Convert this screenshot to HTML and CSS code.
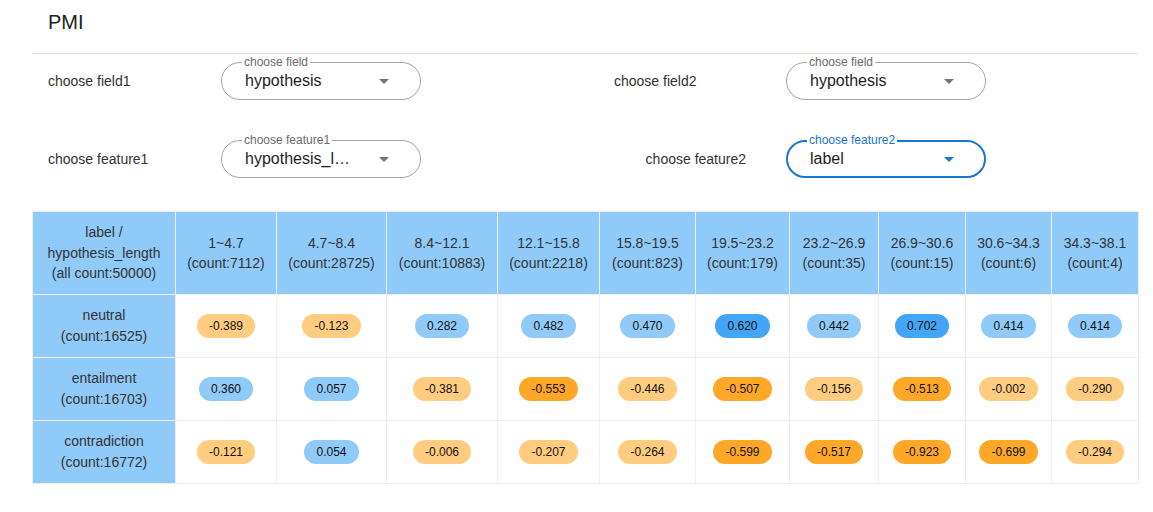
FILE: index.html
```html
<!DOCTYPE html>
<html>
<head>
<meta charset="utf-8">
<link rel="stylesheet" href="styles.css">
</head>
<body>
<div class="page">
  <header class="title-bar"><h1 class="title">PMI</h1></header>
  <section class="form">
    <div class="form-row">
      <div class="lbl lbl-left">choose field1</div>
      <div class="select">
        <span class="legend">choose field</span>
        <span class="value">hypothesis</span>
        <span class="arrow"></span>
      </div>
      <div class="lbl lbl-right lbl-field2">choose field2</div>
      <div class="select">
        <span class="legend">choose field</span>
        <span class="value">hypothesis</span>
        <span class="arrow"></span>
      </div>
    </div>
    <div class="form-row">
      <div class="lbl lbl-left">choose feature1</div>
      <div class="select">
        <span class="legend">choose feature1</span>
        <span class="value" title="hypothesis_length">hypothesis_l…</span>
        <span class="arrow"></span>
      </div>
      <div class="lbl lbl-right lbl-feature2">choose feature2</div>
      <div class="select focused">
        <span class="legend">choose feature2</span>
        <span class="value">label</span>
        <span class="arrow"></span>
      </div>
    </div>
  </section>
  <table class="pmi">
    <thead>
      <tr>
        <th>label /<br>hypothesis_length<br>(all count:50000)</th>
        <th>1~4.7<br>(count:7112)</th>
        <th>4.7~8.4<br>(count:28725)</th>
        <th>8.4~12.1<br>(count:10883)</th>
        <th>12.1~15.8<br>(count:2218)</th>
        <th>15.8~19.5<br>(count:823)</th>
        <th>19.5~23.2<br>(count:179)</th>
        <th>23.2~26.9<br>(count:35)</th>
        <th>26.9~30.6<br>(count:15)</th>
        <th>30.6~34.3<br>(count:6)</th>
        <th>34.3~38.1<br>(count:4)</th>
      </tr>
    </thead>
    <tbody>
      <tr>
        <th>neutral<br>(count:16525)</th>
        <td><span class="chip neg">-0.389</span></td>
        <td><span class="chip neg">-0.123</span></td>
        <td><span class="chip pos">0.282</span></td>
        <td><span class="chip pos">0.482</span></td>
        <td><span class="chip pos">0.470</span></td>
        <td><span class="chip pos-strong">0.620</span></td>
        <td><span class="chip pos">0.442</span></td>
        <td><span class="chip pos-strong">0.702</span></td>
        <td><span class="chip pos">0.414</span></td>
        <td><span class="chip pos">0.414</span></td>
      </tr>
      <tr>
        <th>entailment<br>(count:16703)</th>
        <td><span class="chip pos">0.360</span></td>
        <td><span class="chip pos">0.057</span></td>
        <td><span class="chip neg">-0.381</span></td>
        <td><span class="chip neg-strong">-0.553</span></td>
        <td><span class="chip neg">-0.446</span></td>
        <td><span class="chip neg-strong">-0.507</span></td>
        <td><span class="chip neg">-0.156</span></td>
        <td><span class="chip neg-strong">-0.513</span></td>
        <td><span class="chip neg">-0.002</span></td>
        <td><span class="chip neg">-0.290</span></td>
      </tr>
      <tr>
        <th>contradiction<br>(count:16772)</th>
        <td><span class="chip neg">-0.121</span></td>
        <td><span class="chip pos">0.054</span></td>
        <td><span class="chip neg">-0.006</span></td>
        <td><span class="chip neg">-0.207</span></td>
        <td><span class="chip neg">-0.264</span></td>
        <td><span class="chip neg-strong">-0.599</span></td>
        <td><span class="chip neg-strong">-0.517</span></td>
        <td><span class="chip neg-strong">-0.923</span></td>
        <td><span class="chip neg-strong">-0.699</span></td>
        <td><span class="chip neg">-0.294</span></td>
      </tr>
    </tbody>
  </table>
</div>
</body>
</html>
```

FILE: styles.css
```css
* { box-sizing: border-box; }
html, body { margin: 0; padding: 0; background: #fff; }
body {
  font-family: "Liberation Sans", Arial, sans-serif;
  color: #222;
}
.page {
  width: 1106px;
  margin-left: 32px;
}
.title-bar {
  height: 54px;
  padding: 10px 16px 0;
  border-bottom: 1px solid #e0e0e0;
}
.title {
  margin: 0;
  font-size: 20px;
  line-height: 24px;
  font-weight: 400;
  color: #222;
}
.form {
  padding-top: 8px;
  display: flex;
  flex-direction: column;
  gap: 40px;
}
.form-row {
  display: flex;
  align-items: center;
  height: 38px;
}
.lbl {
  font-size: 14px;
  color: #333;
}
.lbl-left {
  width: 189px;
  padding-left: 16px;
  flex: none;
}
.lbl-right {
  width: 365px;
  flex: none;
}
.lbl-field2 { padding-left: 193px; }
.lbl-feature2 { text-align: right; padding-right: 40px; }
.select {
  position: relative;
  flex: none;
  width: 200px;
  height: 38px;
  border: 1px solid #a3a3a3;
  border-radius: 19px;
  display: flex;
  align-items: center;
  padding-left: 23px;
}
.select.focused {
  border: 2px solid #1976d2;
  padding-left: 22px;
}
.legend {
  position: absolute;
  top: -8px;
  left: 20px;
  padding: 0 2px;
  background: #fff;
  font-size: 12px;
  line-height: 14px;
  color: #6b6b6b;
}
.focused .legend { top: -9px; left: 19px; color: #1976d2; }
.value {
  font-size: 16px;
  color: #1e1e1e;
  white-space: nowrap;
}
.arrow {
  position: absolute;
  right: 31px;
  top: 16px;
  width: 0;
  height: 0;
  border-left: 5px solid transparent;
  border-right: 5px solid transparent;
  border-top: 5px solid #757575;
}
.focused .arrow { right: 30px; top: 15px; border-top-color: #1976d2; }

.pmi {
  margin-top: 33px;
  width: 1106px;
  border-collapse: collapse;
  table-layout: fixed;
  font-size: 14px;
  line-height: 20.5px;
  color: #333;
}
.pmi th, .pmi td {
  border: 1px solid #eeeeee;
  text-align: center;
  vertical-align: middle;
  font-weight: 400;
  padding: 0;
}
.pmi thead th {
  background: #90caf9;
  height: 83px;
}
.pmi tbody th {
  background: #90caf9;
  height: 63px;
  line-height: 21px;
}
.pmi tbody td { background: #fff; }
.pmi thead th:nth-child(1) { width: 143px; }
.pmi thead th:nth-child(2) { width: 101px; }
.pmi thead th:nth-child(3) { width: 110px; }
.pmi thead th:nth-child(4) { width: 111px; }
.pmi thead th:nth-child(5) { width: 102px; }
.pmi thead th:nth-child(6) { width: 96px; }
.pmi thead th:nth-child(7) { width: 94px; }
.pmi thead th:nth-child(8) { width: 89px; }
.pmi thead th:nth-child(9) { width: 87px; }
.pmi thead th:nth-child(10) { width: 86px; }
.pmi thead th:nth-child(11) { width: 87px; }
.chip {
  display: inline-block;
  height: 24px;
  line-height: 24px;
  padding: 0 12px;
  border-radius: 12px;
  font-size: 12px;
  color: #111;
}
.chip.neg { background: #ffcc80; }
.chip.neg-strong { background: #ffa726; }
.chip.pos { background: #90caf9; }
.chip.pos-strong { background: #42a5f5; }
```
